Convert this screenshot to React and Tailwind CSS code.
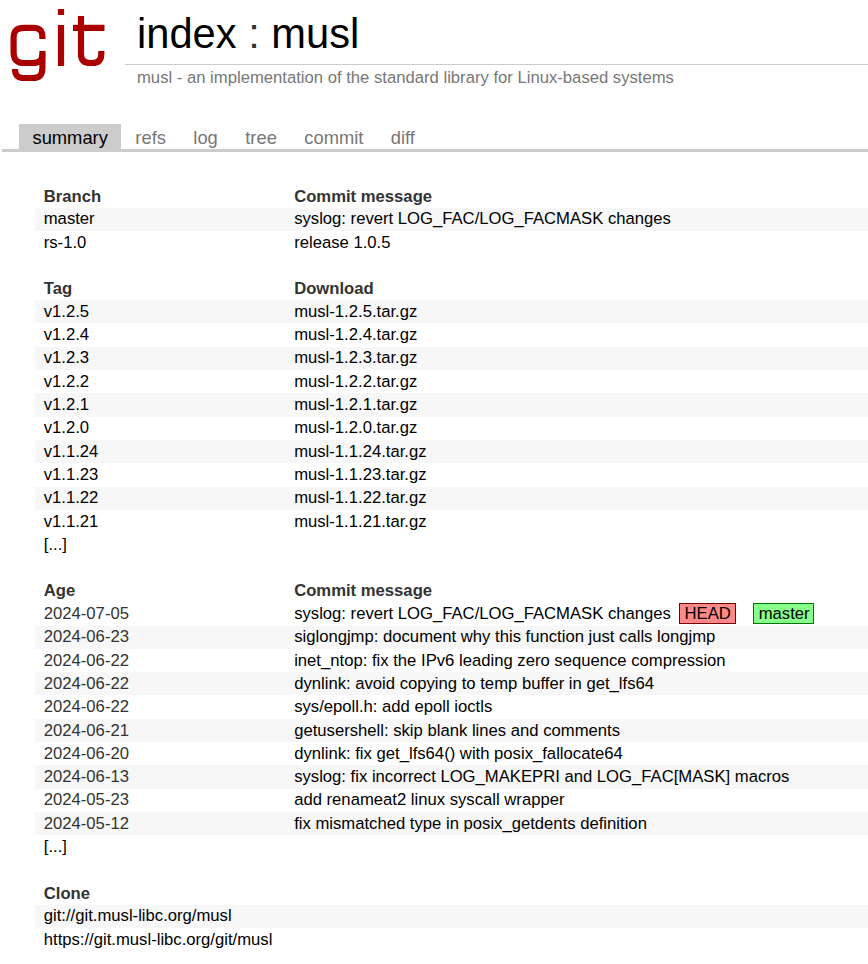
const tabs = ["refs", "log", "tree", "commit", "diff"];

const branches = [
  ["master", "syslog: revert LOG_FAC/LOG_FACMASK changes"],
  ["rs-1.0", "release 1.0.5"],
];

const tags = ["1.2.5", "1.2.4", "1.2.3", "1.2.2", "1.2.1", "1.2.0", "1.1.24", "1.1.23", "1.1.22", "1.1.21"].map(
  (v) => [`v${v}`, `musl-${v}.tar.gz`]
);

const commits = [
  ["2024-07-05", "syslog: revert LOG_FAC/LOG_FACMASK changes"],
  ["2024-06-23", "siglongjmp: document why this function just calls longjmp"],
  ["2024-06-22", "inet_ntop: fix the IPv6 leading zero sequence compression"],
  ["2024-06-22", "dynlink: avoid copying to temp buffer in get_lfs64"],
  ["2024-06-22", "sys/epoll.h: add epoll ioctls"],
  ["2024-06-21", "getusershell: skip blank lines and comments"],
  ["2024-06-20", "dynlink: fix get_lfs64() with posix_fallocate64"],
  ["2024-06-13", "syslog: fix incorrect LOG_MAKEPRI and LOG_FAC[MASK] macros"],
  ["2024-05-23", "add renameat2 linux syscall wrapper"],
  ["2024-05-12", "fix mismatched type in posix_getdents definition"],
];

function Logo() {
  return (
    <svg className="block h-[90px] w-[125px] shrink-0" viewBox="0 0 125 90" fill="none" stroke="#a00" strokeWidth="6.2">
      <path d="M42.4 39V37C42.4 30 39 27.8 33 27.8H24C16.5 27.8 13.6 31 13.6 38V52C13.6 60 17 63 24 63H33C39.5 63 42.4 60 42.4 54" />
      <path d="M42.4 51V68C42.4 75 39.5 78 33 78H24C18 78 15 75.5 15 69" />
      <path d="M61 25V66M61 9V15" />
      <path d="M73 27.8H104.5M81 16V54C81 60 84 63 90 63H92.5C98.5 63 101.3 60 101.3 54V51" />
    </svg>
  );
}

function Head({ left, right }) {
  return (
    <div className="flex h-[22.67px] items-center pl-[8.75px] font-bold text-[#333]">
      <div className="w-[250.4px]">{left}</div>
      <div>{right}</div>
    </div>
  );
}

function Row({ left, right, shaded, muted, children }) {
  return (
    <div
      className={`flex items-center whitespace-nowrap pb-[0.8px] pl-[8.75px] ${muted ? "h-[23.3px]" : "h-[23.3125px]"} ${
        shaded ? "bg-[#f7f7f7]" : ""
      }`}
    >
      <div className={`w-[250.4px] shrink-0 ${muted ? "text-[#333]" : ""}`}>{left}</div>
      <div>{right}</div>
      {children}
    </div>
  );
}

export default function App() {
  return (
    <div className="h-[964px] w-full overflow-hidden bg-white font-['Liberation_Sans',Arial,sans-serif] text-[16.667px] leading-[19px] text-black">
      <header className="flex h-[124px]">
        <Logo />
        <div className="grow">
          <h1 className="h-[65px] border-b border-[#ccc] pl-3 pt-[10px] text-[41.667px] leading-[48px]">
            index <span className="text-[#333]">:</span> musl
          </h1>
          <p className="pl-3 pt-[3px] text-[#777]">musl - an implementation of the standard library for Linux-based systems</p>
        </div>
      </header>
      <nav className="ml-[2px] flex h-7 border-b-[3px] border-[#ccc] pl-[17px] text-[18.333px] leading-[21px] text-[#777]">
        <span className="bg-[#ccc] px-[13.5px] pt-[3px] text-black">summary</span>
        {tabs.map((tab, i) => (
          <span key={tab} className={`pr-[13.7px] pt-[3px] ${i ? "pl-[13.75px]" : "pl-[14px]"}`}>
            {tab}
          </span>
        ))}
      </nav>
      <main className="ml-[35px] pt-[32.96px]">
        <Head left="Branch" right="Commit message" />
        {branches.map(([name, message], i) => (
          <Row key={name} left={name} right={message} shaded={i % 2 === 0} />
        ))}
        <div className="h-[23.16px]" />
        <Head left="Tag" right="Download" />
        {tags.map(([name, file], i) => (
          <Row key={name} left={name} right={file} shaded={i % 2 === 0} />
        ))}
        <Row left="[...]" />
        <div className="h-[22.64px]" />
        <Head left="Age" right="Commit message" />
        <div className="h-[0.5px]" />
        {commits.map(([date, message], i) => (
          <Row key={message} left={date} right={message} muted shaded={i % 2 === 1}>
            {i === 0 && (
              <>
                <span className="ml-[7.6px] h-[21px] border border-[#700] bg-[#f88] pl-[5px] pr-[4.5px]">HEAD</span>
                <span className="ml-[17px] h-[21px] border border-[#070] bg-[#8f8] pl-[4.4px] pr-[3.6px]">master</span>
              </>
            )}
          </Row>
        ))}
        <Row left="[...]" />
        <div className="h-[23.4px]" />
        <Head left="Clone" />
        <Row left="git://git.musl-libc.org/musl" shaded />
        <Row left="https://git.musl-libc.org/git/musl" />
      </main>
    </div>
  );
}
